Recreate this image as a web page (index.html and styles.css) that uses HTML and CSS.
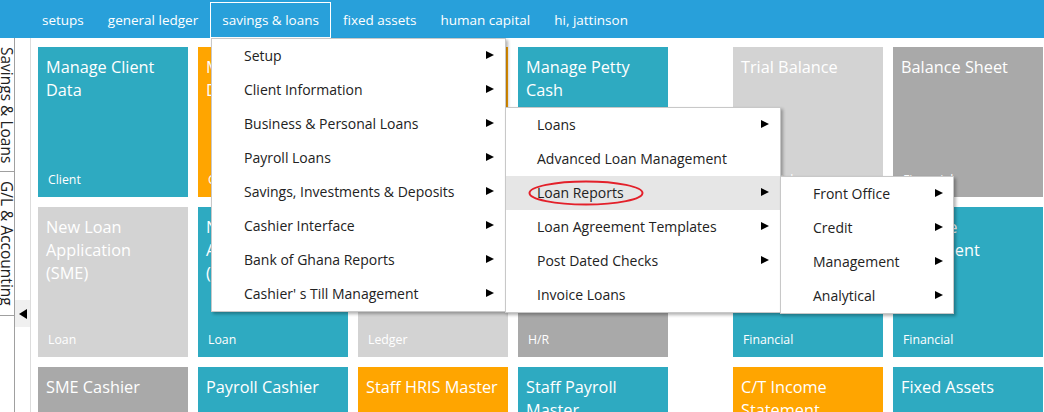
FILE: index.html
```html
<!DOCTYPE html>
<html lang="en">
<head>
<meta charset="utf-8">
<title>Savings &amp; Loans</title>
<link rel="stylesheet" href="styles.css">
</head>
<body>
<div class="app">
  <nav class="topnav">
    <span class="nav-item">setups</span>
    <span class="nav-item">general ledger</span>
    <span class="nav-item active">savings &amp; loans</span>
    <span class="nav-item">fixed assets</span>
    <span class="nav-item">human capital</span>
    <span class="nav-item">hi, jattinson</span>
  </nav>

  <div class="main">
    <aside class="tabs">
      <div class="tab tab-1">Savings &amp; Loans</div>
      <div class="tab tab-2">G/L &amp; Accounting</div>
    </aside>
    <div class="collapse-col">
      <div class="collapse-btn">
        <svg width="8" height="10" viewBox="0 0 8 10"><polygon points="8,0 0,5 8,10" fill="#000"/></svg>
      </div>
    </div>

    <section class="tiles">
      <div class="group group-4">
        <div class="tile teal"><div class="tile-title">Manage Client Data</div><div class="tile-tag">Client</div></div>
        <div class="tile orange"><div class="tile-title">Manage Client Deposits</div><div class="tile-tag">Client</div></div>
        <div class="tile orange"><div class="tile-title">Manage Savings</div><div class="tile-tag">Savings</div></div>
        <div class="tile teal"><div class="tile-title">Manage Petty Cash</div><div class="tile-tag">Cash</div></div>

        <div class="tile light"><div class="tile-title">New Loan Application<br>(SME)</div><div class="tile-tag">Loan</div></div>
        <div class="tile teal"><div class="tile-title">New Loan Application (Payroll)</div><div class="tile-tag">Loan</div></div>
        <div class="tile light"><div class="tile-title">General Ledger</div><div class="tile-tag">Ledger</div></div>
        <div class="tile dark"><div class="tile-title">Staff Records</div><div class="tile-tag">H/R</div></div>

        <div class="tile dark"><div class="tile-title">SME Cashier</div><div class="tile-tag">Cashier</div></div>
        <div class="tile teal"><div class="tile-title">Payroll Cashier</div><div class="tile-tag">Cashier</div></div>
        <div class="tile orange"><div class="tile-title">Staff HRIS Master</div><div class="tile-tag">H/R</div></div>
        <div class="tile teal"><div class="tile-title">Staff Payroll Master</div><div class="tile-tag">H/R</div></div>
      </div>
      <div class="group group-2">
        <div class="tile light"><div class="tile-title">Trial Balance</div><div class="tile-tag">Financial</div></div>
        <div class="tile dark"><div class="tile-title">Balance Sheet</div><div class="tile-tag">Financial</div></div>

        <div class="tile teal"><div class="tile-title">Cash Flow Statement</div><div class="tile-tag">Financial</div></div>
        <div class="tile teal"><div class="tile-title">Income Statement</div><div class="tile-tag">Financial</div></div>

        <div class="tile orange"><div class="tile-title">C/T Income Statement</div><div class="tile-tag">Financial</div></div>
        <div class="tile teal"><div class="tile-title">Fixed Assets</div><div class="tile-tag">Assets</div></div>
      </div>
    </section>
  </div>

  <ul class="menu menu-1">
    <li class="menu-item">Setup<span class="arrow"></span></li>
    <li class="menu-item">Client Information<span class="arrow"></span></li>
    <li class="menu-item">Business &amp; Personal Loans<span class="arrow"></span></li>
    <li class="menu-item">Payroll Loans<span class="arrow"></span></li>
    <li class="menu-item">Savings, Investments &amp; Deposits<span class="arrow"></span></li>
    <li class="menu-item">Cashier Interface<span class="arrow"></span></li>
    <li class="menu-item">Bank of Ghana Reports<span class="arrow"></span></li>
    <li class="menu-item">Cashier' s Till Management<span class="arrow"></span></li>
  </ul>

  <ul class="menu menu-2">
    <li class="menu-item">Loans<span class="arrow"></span></li>
    <li class="menu-item">Advanced Loan Management</li>
    <li class="menu-item hover">Loan Reports<span class="arrow"></span></li>
    <li class="menu-item">Loan Agreement Templates<span class="arrow"></span></li>
    <li class="menu-item">Post Dated Checks<span class="arrow"></span></li>
    <li class="menu-item">Invoice Loans</li>
  </ul>

  <ul class="menu menu-3">
    <li class="menu-item">Front Office<span class="arrow"></span></li>
    <li class="menu-item">Credit<span class="arrow"></span></li>
    <li class="menu-item">Management<span class="arrow"></span></li>
    <li class="menu-item">Analytical<span class="arrow"></span></li>
  </ul>

  <svg class="annotation" width="120" height="30" viewBox="0 0 120 30">
    <ellipse cx="59" cy="14" rx="56.5" ry="11.5" fill="none" stroke="#e3202a" stroke-width="2"/>
  </svg>
</div>
</body>
</html>
```

FILE: styles.css
```css
* { box-sizing: border-box; }

html, body {
  margin: 0;
  padding: 0;
  height: 412px;
  overflow: hidden;
  background: #fff;
  font-family: "Open Sans", "Noto Sans", sans-serif;
}

.app {
  position: relative;
  height: 412px;
}

/* top navigation */
.topnav {
  height: 38px;
  background: #28a0da;
  display: flex;
  align-items: flex-end;
  padding-left: 30px;
}

.nav-item {
  color: #fff;
  font-size: 13.5px;
  height: 36px;
  line-height: 34px;
  padding: 0 11px;
  border: 1px solid transparent;
  white-space: nowrap;
}

.nav-item.active {
  border-color: #fff;
}

/* main area */
.main {
  display: flex;
  height: 374px;
}

.tabs {
  width: 15px;
  border-right: 1px solid #a0a0a0;
  flex: none;
}

.tab {
  writing-mode: vertical-rl;
  font-size: 15.5px;
  line-height: 14px;
  color: #222;
  padding: 9px 0;
  border-bottom: 1px solid #a0a0a0;
  overflow: hidden;
  white-space: nowrap;
}

.tab-1 { height: 134px; }
.tab-2 { height: 144px; }

.collapse-col {
  width: 16px;
  flex: none;
  border-right: 1px solid #dcdcdc;
  padding-top: 262px;
}

.collapse-btn {
  height: 27px;
  background: #f0f0f0;
  display: flex;
  align-items: center;
  justify-content: center;
}

/* tiles */
.tiles {
  display: flex;
  gap: 65px;
  padding: 9px 0 0 7px;
}

.group {
  display: grid;
  grid-auto-rows: 150px;
  gap: 10px;
}

.group-4 { grid-template-columns: repeat(4, 150px); }
.group-2 { grid-template-columns: repeat(2, 150px); }

.tile {
  color: #fff;
  padding: 9px 8px 9px 8px;
  display: flex;
  flex-direction: column;
  justify-content: space-between;
}

.tile-title {
  font-size: 16.3px;
  line-height: 23px;
}

.tile-tag {
  font-size: 12.3px;
  line-height: 16px;
  padding-left: 2px;
}

.teal { background: #2eaac1; }
.orange { background: #ffa500; }
.light { background: #d3d3d3; }
.dark { background: #a9a9a9; }

/* dropdown menus */
.menu {
  position: absolute;
  margin: 0;
  padding: 0;
  list-style: none;
  background: #fff;
  border: 1px solid #c8c8c8;
  box-shadow: 2px 2px 3px rgba(0, 0, 0, 0.3);
}

.menu-1 { left: 211px; top: 38px; width: 295px; }
.menu-2 { left: 505px; top: 107px; width: 276px; }
.menu-3 { left: 780px; top: 176px; width: 174px; }

.menu-item {
  position: relative;
  height: 34px;
  line-height: 34px;
  padding-left: 32px;
  font-size: 14px;
  color: #222;
  white-space: nowrap;
}

.menu-2 .menu-item { padding-left: 31px; }

.menu-item.hover { background: #e6e6e6; }

.arrow {
  position: absolute;
  right: 11px;
  top: 12px;
  width: 0;
  height: 0;
  border-left: 8px solid #000;
  border-top: 4.5px solid transparent;
  border-bottom: 4.5px solid transparent;
}

.menu-3 .arrow { right: 10px; }

.annotation {
  position: absolute;
  left: 527px;
  top: 179px;
}
```
